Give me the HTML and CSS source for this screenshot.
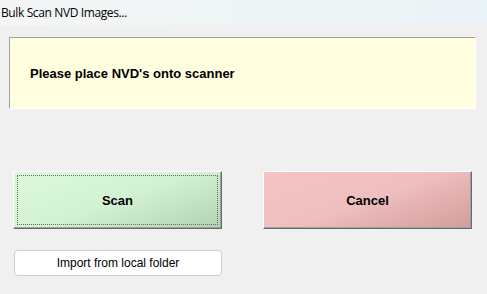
FILE: index.html
```html
<!DOCTYPE html>
<html>
<head>
<meta charset="utf-8">
<link rel="stylesheet" href="styles.css">
</head>
<body>
<div class="window">
  <div class="titlebar">Bulk Scan NVD Images...</div>
  <div class="content">
    <div class="message">Please place NVD's onto scanner</div>
    <div class="actions">
      <button class="btn3d scan">Scan</button>
      <button class="btn3d cancel">Cancel</button>
    </div>
    <button class="import">Import from local folder</button>
  </div>
</div>
</body>
</html>
```
FILE: styles.css
```css
html, body {
  margin: 0;
  padding: 0;
  background: #f0f0f0;
}
.window {
  width: 487px;
  height: 294px;
  background: #f0f0f0;
  font-family: "Liberation Sans", Arial, sans-serif;
  overflow: hidden;
}
.titlebar {
  height: 25px;
  box-sizing: border-box;
  padding: 5px 0 0 1px;
  font-family: "Open Sans", "Liberation Sans", sans-serif;
  font-size: 12px;
  line-height: 15px;
  color: #000;
  background: linear-gradient(to right, #f4f6f6, #eaf3f6);
  letter-spacing: -0.38px;
}
.content {
  display: flex;
  flex-direction: column;
  padding: 12px 0 0 0;
}
.message {
  margin-left: 9px;
  width: 467px;
  height: 72px;
  box-sizing: border-box;
  background: #ffffdf;
  border-top: 1px solid #a0a0a0;
  border-left: 1px solid #a0a0a0;
  border-right: 1px solid #ffffff;
  border-bottom: 1px solid #ffffff;
  display: flex;
  align-items: center;
  padding-left: 20px;
  font-weight: bold;
  font-size: 13px;
  color: #000;
}
.actions {
  display: flex;
  gap: 41px;
  margin-top: 62px;
  padding-left: 13px;
}
.btn3d {
  width: 209px;
  height: 58px;
  box-sizing: border-box;
  border-top: 1px solid #ffffff;
  border-left: 1px solid #ffffff;
  border-right: 1px solid #696969;
  border-bottom: 1px solid #696969;
  box-shadow: inset -1px -1px 0 #a0a0a0;
  font-family: "Liberation Sans", Arial, sans-serif;
  font-weight: bold;
  font-size: 13px;
  color: #000;
  padding: 0;
  margin: 0;
}
.scan {
  background: linear-gradient(160deg, #dcf9dc 0%, #d3f2d3 50%, #b2d2b4 100%);
  outline: 1px dotted #6a6a6a;
  outline-offset: -5px;
}
.cancel {
  background: linear-gradient(160deg, #f5c3c3 0%, #efbebe 50%, #d29c9c 100%);
}
.import {
  margin-top: 21px;
  margin-left: 14px;
  width: 208px;
  height: 26px;
  box-sizing: border-box;
  background: #ffffff;
  border: 1px solid #cfcfcf;
  border-radius: 4px;
  font-family: "Liberation Sans", Arial, sans-serif;
  font-size: 12px;
  color: #000;
  padding: 0;
}
```
